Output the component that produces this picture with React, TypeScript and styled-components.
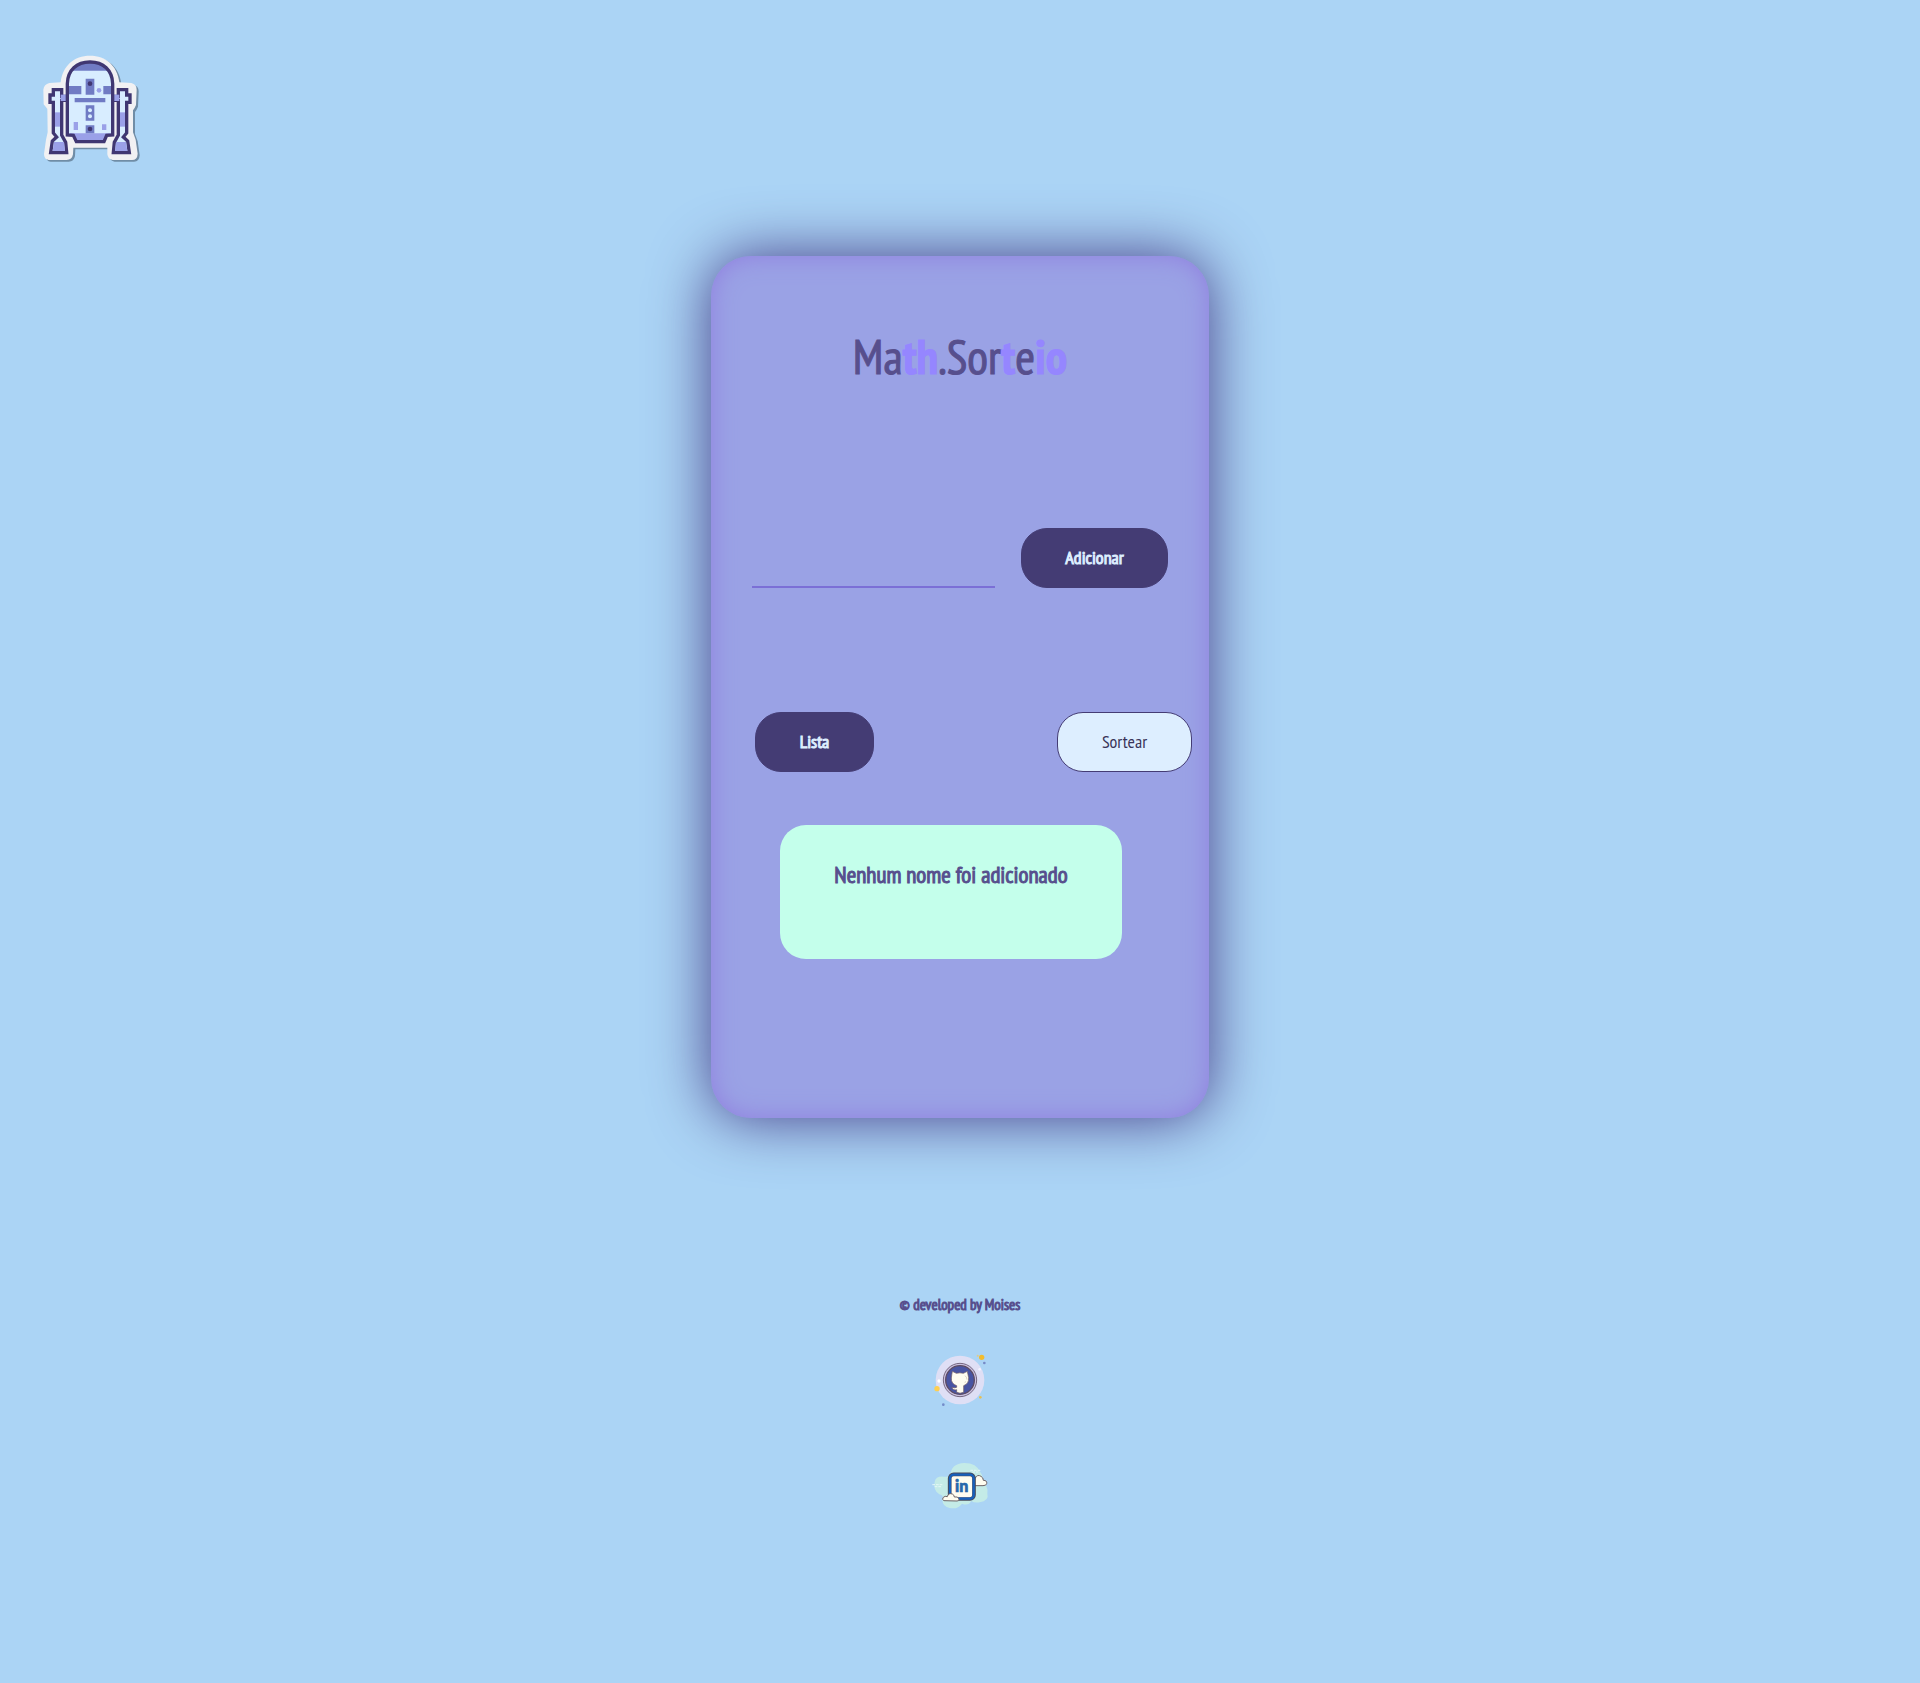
import React, { useState } from "react";
import styled, { createGlobalStyle, css } from "styled-components";

const GlobalStyle = createGlobalStyle`
  *, *::before, *::after { box-sizing: border-box; }
  body {
    margin: 0;
    min-height: 100vh;
    background: #abd4f5;
    color: #574f8d;
    font-family: "PT Sans Narrow", "Liberation Sans Narrow", "Open Sans", sans-serif;
  }
`;

const strong = css`
  font-weight: 400;
  -webkit-text-stroke: 1px currentColor;
`;

const Page = styled.div`
  display: flex;
  flex-direction: column;
  min-height: 100vh;
`;

const Header = styled.header`
  display: flex;
  padding: 45px 30px 0;
`;

const RobotArt = styled.svg`
  display: block;
  width: 120px;
  height: 125px;
`;

const Main = styled.main`
  display: flex;
  justify-content: center;
  padding: 86px 16px 0;
`;

const Card = styled.section`
  display: flex;
  flex-direction: column;
  width: 100%;
  max-width: 498px;
  padding: 70px 0 159px;
  border-radius: 40px;
  background: #9aa2e5;
  box-shadow: 0 0 60px #453d88, inset 0 0 24px #907fdf;
`;

const Title = styled.h1`
  margin: 0;
  text-align: center;
  font-size: 48px;
  line-height: 60px;
  ${strong}
`;

const Accent = styled.span`
  color: #9586ff;
  font-weight: 700;
`;

const Form = styled.form`
  display: flex;
  gap: 26px;
  margin-top: 142px;
  padding: 0 41px;
`;

const NameInput = styled.input`
  flex: 1;
  min-width: 0;
  height: 60px;
  padding: 20px 8px 0;
  border: 0;
  border-bottom: 2px solid #7b6fd6;
  outline: none;
  background: transparent;
  color: #443c74;
  font: inherit;
  font-size: 23px;
`;

const Button = styled.button<{ $light?: boolean; $width: number }>`
  height: 60px;
  min-width: ${(p) => p.$width}px;
  padding: 0 24px;
  border: 1px solid #443c74;
  border-radius: 26px;
  background: #443c74;
  color: #ddeeff;
  font-family: inherit;
  font-size: 18px;
  line-height: 24px;
  cursor: pointer;
  ${strong}
  ${(p) =>
    p.$light &&
    css`
      background: #ddeeff;
      color: #393459;
      -webkit-text-stroke: 0;
    `}
`;

const Actions = styled.div`
  display: flex;
  justify-content: space-between;
  margin-top: 124px;
  padding: 0 17px 0 44px;
`;

const Result = styled.div`
  min-height: 134px;
  margin: 53px 87px 0 69px;
  padding: 34px 16px;
  border-radius: 26px;
  background: #c4ffeb;
  text-align: center;
  font-size: 23px;
  line-height: 32px;
  ${strong}
`;

const Footer = styled.footer`
  display: flex;
  flex-direction: column;
  align-items: center;
  padding: 175px 16px 80px;
`;

const Credit = styled.p`
  margin: 0;
  font-size: 15px;
  line-height: 24px;
  ${strong}
`;

const Social = styled.a`
  display: block;
  margin-top: 28px;
  & + & {
    margin-top: 35px;
  }
`;

const SocialArt = styled.svg`
  display: block;
  width: 70px;
  height: 70px;
`;

const silhouette =
  "M92 112 C98 62 132 32 180 32 C228 32 262 62 268 112 L304 114 Q320 118 320 134 L318 180 Q314 190 309 196 L309 262 L317 284 L323 326 Q322 345 306 345 L248 345 Q234 343 232 328 L232 308 L130 308 L129 328 Q126 345 110 345 L56 345 Q42 343 42 327 L48 284 L53 262 L52 192 L41 178 L40 134 Q42 118 58 114 Z";

const Leg = () => (
  <g strokeLinejoin="miter">
    <path
      d="M70 134H95V154H108V166H95V270L107 292L110 323H62L67 288L80 276L70 264V172H60V150H70Z"
      fill="#d8edff"
      stroke="#403772"
      strokeWidth="10"
    />
    <path d="M75 202H90V245H75Z" fill="#9aa0e8" />
    <path d="M92 149H116V168H92Z" fill="#9aa0e8" />
    <path d="M72 291H102L105 318H68Z" fill="#9aa0e8" />
  </g>
);

const Robot = () => (
  <RobotArt viewBox="0 0 360 375" role="img" aria-label="R2-D2">
    <path d={silhouette} fill="#708da6" transform="translate(6 5)" />
    <path d={silhouette} fill="#f1f1f3" />
    <Leg />
    <g transform="translate(360 0) scale(-1 1)">
      <Leg />
    </g>
    <path
      d="M112 270V116C113 76 140 51 180 51C220 51 247 76 248 116V270L230 274L222 290H139L130 274Z"
      fill="#d8edff"
    />
    <path d="M125 77Q143 54 180 54Q217 54 235 77Z" fill="#707bc4" />
    <path d="M116 123H154V148H116ZM220 123H245V148H220Z" fill="#707bc4" />
    <path d="M116 265H245L234 273L220 288H141L130 271Z" fill="#9aa0e8" />
    <path
      d="M112 270V116C113 76 140 51 180 51C220 51 247 76 248 116V270L230 271L222 290H139L130 271Z"
      fill="none"
      stroke="#403772"
      strokeWidth="10"
    />
    <path d="M167 101H193V149H167ZM134 159H226V172H134ZM167 181H193V227H167ZM167 241H193V265H167Z" fill="#707bc4" />
    <circle cx="180" cy="116" r="7" fill="#403772" />
    <circle cx="180" cy="252" r="7" fill="#403772" />
    <circle cx="207" cy="136" r="7" fill="#9aa0e8" />
    <circle cx="180" cy="196" r="6" fill="#d8edff" />
    <circle cx="180" cy="214" r="6" fill="#d8edff" />
    <path d="M131 231H144V255H131ZM216 238H229V255H216Z" fill="#9aa0e8" />
  </RobotArt>
);

const GithubBadge = () => (
  <SocialArt viewBox="0 0 210 210" aria-hidden="true">
    <circle cx="105" cy="105" r="73" fill="#dfdff5" />
    <circle cx="105" cy="105" r="50" fill="#c9c0df" stroke="#756780" strokeWidth="3" />
    <circle cx="105" cy="105" r="43" fill="#4854a2" stroke="#5c4b62" strokeWidth="4" />
    <path
      d="M82 79L94 85Q105 82 115 85L127 79Q129 90 131 98Q132 116 116 122V142Q105 147 95 142V134Q84 137 80 127Q88 130 95 127V122Q78 116 79 99Q80 90 82 79Z"
      fill="#fffdf1"
      stroke="#6c5860"
      strokeWidth="2"
    />
    <path d="M120 92Q126 96 126 104M119 112L123 110" fill="none" stroke="#c9bda8" strokeWidth="2" />
    <circle cx="170" cy="37" r="8" fill="#f3bc2e" />
    <circle cx="158" cy="32" r="3" fill="#e2ca86" />
    <circle cx="36" cy="131" r="8" fill="#ffcf50" />
    <circle cx="166" cy="157" r="4" fill="#e8c052" />
    <circle cx="178" cy="54" r="4" fill="#778bc7" />
    <circle cx="55" cy="179" r="4" fill="#738bc9" />
    <circle cx="42" cy="108" r="5" fill="#fff" />
    <circle cx="164" cy="73" r="4" fill="#f4f3ff" />
  </SocialArt>
);

const LinkedinBadge = () => (
  <SocialArt viewBox="0 0 210 210" aria-hidden="true">
    <path
      d="M29 96Q32 78 56 80Q70 82 76 76Q78 40 118 39Q155 39 166 67Q175 76 171 95Q190 105 187 130Q193 153 164 157Q147 159 139 153Q130 169 111 161Q98 179 74 174Q53 170 52 150Q58 136 43 133Q24 122 29 96Z"
      fill="#c4ebe7"
    />
    <path d="M22 104H55M136 61H169M29 110H48M142 66H160" stroke="#e4f7f7" strokeWidth="3" strokeDasharray="8 3" />
    <path
      d="M145 105Q139 88 151 84Q157 72 168 79Q175 83 175 91Q187 91 185 101Q184 107 174 107H149Z"
      fill="#fffdf0"
      stroke="#6d6265"
      strokeWidth="3"
    />
    <rect x="74" y="73" width="73" height="74" rx="12" fill="#fffdf0" stroke="#4a4b5b" strokeWidth="11" />
    <rect x="75" y="74" width="71" height="72" rx="11" fill="none" stroke="#1761bd" strokeWidth="7" />
    <text
      x="110"
      y="127"
      textAnchor="middle"
      fill="#2869aa"
      stroke="#2869aa"
      strokeWidth="2"
      fontFamily="Lato, sans-serif"
      fontSize="48"
      fontWeight="900"
    >
      in
    </text>
    <path
      d="M57 152Q49 149 55 142Q60 137 67 140Q70 128 82 132Q88 135 88 141Q99 138 102 147Q104 153 96 153Z"
      fill="#fffdf0"
      stroke="#6d6265"
      strokeWidth="3"
    />
  </SocialArt>
);

export default function App() {
  const [name, setName] = useState("");
  const [names, setNames] = useState<string[]>([]);
  const [message, setMessage] = useState("Nenhum nome foi adicionado");

  const add = (event: React.FormEvent) => {
    event.preventDefault();
    const value = name.trim();
    if (!value) return;
    setNames([...names, value]);
    setMessage(value);
    setName("");
  };

  const list = () => {
    if (names.length) setMessage(names.join(", "));
  };

  const draw = () => {
    if (names.length) setMessage(names[Math.floor(Math.random() * names.length)]);
  };

  return (
    <>
      <GlobalStyle />
      <Page>
        <Header>
          <Robot />
        </Header>
        <Main>
          <Card>
            <Title>
              Ma<Accent>th</Accent>.Sor<Accent>t</Accent>e<Accent>io</Accent>
            </Title>
            <Form onSubmit={add}>
              <NameInput aria-label="Nome" value={name} onChange={(e) => setName(e.target.value)} />
              <Button type="submit" $width={147}>Adicionar</Button>
            </Form>
            <Actions>
              <Button type="button" $width={119} onClick={list}>Lista</Button>
              <Button type="button" $light $width={135} onClick={draw}>Sortear</Button>
            </Actions>
            <Result role="status">{message}</Result>
          </Card>
        </Main>
        <Footer>
          <Credit>© developed by Moises</Credit>
          <Social href="https://github.com" aria-label="GitHub">
            <GithubBadge />
          </Social>
          <Social href="https://www.linkedin.com" aria-label="LinkedIn">
            <LinkedinBadge />
          </Social>
        </Footer>
      </Page>
    </>
  );
}
